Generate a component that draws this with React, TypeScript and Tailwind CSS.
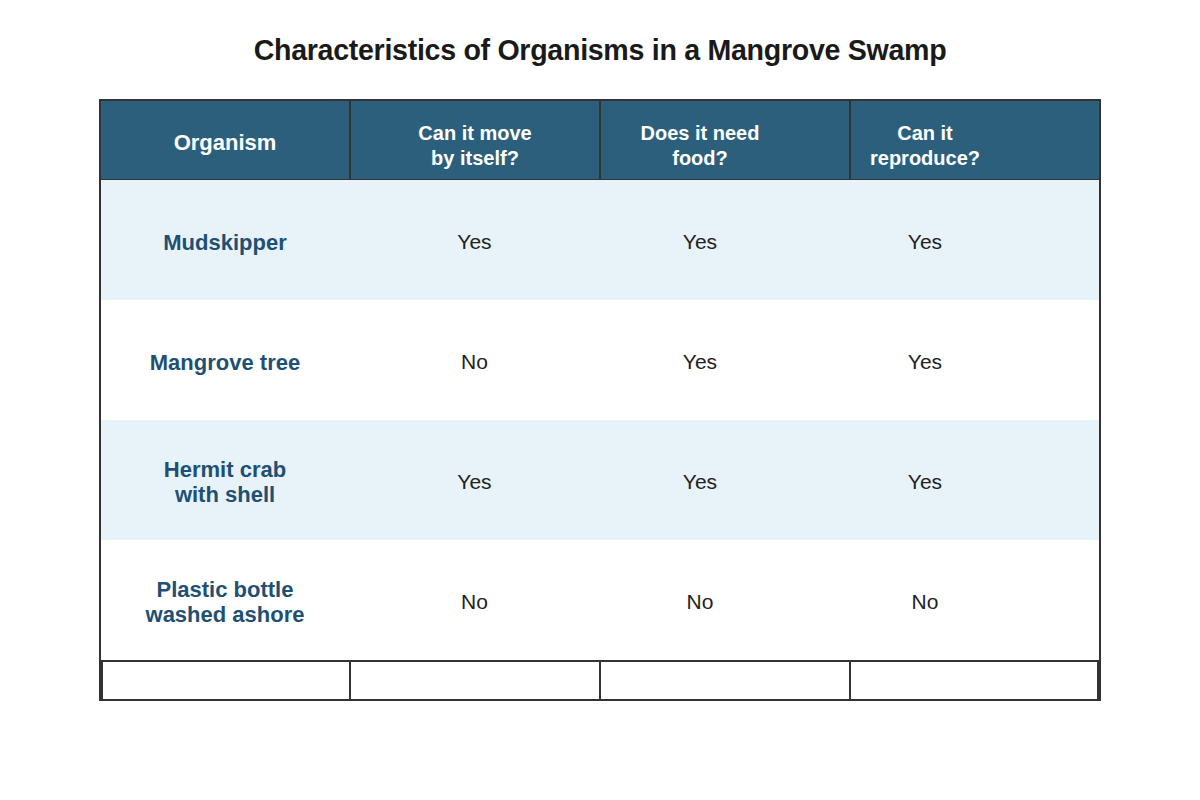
const rows = [
  { name: ['Mudskipper'], move: 'Yes', food: 'Yes', repro: 'Yes', shaded: true },
  { name: ['Mangrove tree'], move: 'No', food: 'Yes', repro: 'Yes', shaded: false },
  { name: ['Hermit crab', 'with shell'], move: 'Yes', food: 'Yes', repro: 'Yes', shaded: true },
  { name: ['Plastic bottle', 'washed ashore'], move: 'No', food: 'No', repro: 'No', shaded: false },
];

function Lines({ lines }: { lines: string[] }) {
  return (
    <>
      {lines.map((l) => (
        <span key={l} className="block">
          {l}
        </span>
      ))}
    </>
  );
}

export default function App() {
  return (
    <main
      className="flex h-[800px] w-[1200px] flex-col items-center bg-white pt-[33px]"
      style={{ fontFamily: '"Liberation Sans", Arial, sans-serif' }}
    >
      <h1 className="text-[28.6px] leading-[34px] font-bold tracking-[-0.3px] text-[#1a1a1a]">
        Characteristics of Organisms in a Mangrove Swamp
      </h1>

      <div className="mt-[32px] w-[1002px] border-2 border-[#333]">
        {/* header */}
        <div className="grid h-[79px] grid-cols-[250px_250px_250px_1fr] border-b border-[#333] bg-[#2c5f7b] text-white font-bold">
          <div className="flex items-center justify-center border-r-2 border-[#333] pt-[5px] text-[22px]">Organism</div>
          <div className="flex items-center justify-center border-r-2 border-[#333] pt-[11px] text-center text-[20px] leading-[25px]">
            <div>
              <Lines lines={['Can it move', 'by itself?']} />
            </div>
          </div>
          <div className="flex items-center justify-center border-r-2 border-[#333] pt-[11px] pr-[50px] text-center text-[20px] leading-[25px]">
            <div>
              <Lines lines={['Does it need', 'food?']} />
            </div>
          </div>
          <div className="flex items-center justify-center pt-[11px] pr-[100px] text-center text-[20px] leading-[25px]">
            <div>
              <Lines lines={['Can it', 'reproduce?']} />
            </div>
          </div>
        </div>

        {/* data rows */}
        {rows.map((r) => (
          <div
            key={r.name.join(' ')}
            className={`grid h-[120px] grid-cols-[248px_251px_200px_250px_1fr] items-center text-[21px] ${r.shaded ? 'bg-[#e8f3f9]' : 'bg-white'}`}
          >
            <div className="pt-[4px] text-center text-[22px] font-bold leading-[25px] text-[#1f5073]">
              <Lines lines={r.name} />
            </div>
            <div className="pt-[4px] text-center text-[#222]">{r.move}</div>
            <div className="pt-[4px] text-center text-[#222]">{r.food}</div>
            <div className="pt-[4px] text-center text-[#222]">{r.repro}</div>
            <div />
          </div>
        ))}

        {/* empty footer row */}
        <div className="grid h-[39px] grid-cols-[250px_250px_250px_1fr] border-t-2 border-[#333]">
          <div className="border-l-2 border-r-2 border-[#333]" />
          <div className="border-r-2 border-[#333]" />
          <div className="border-r-2 border-[#333]" />
          <div className="border-r-2 border-[#333]" />
        </div>
      </div>
    </main>
  );
}
